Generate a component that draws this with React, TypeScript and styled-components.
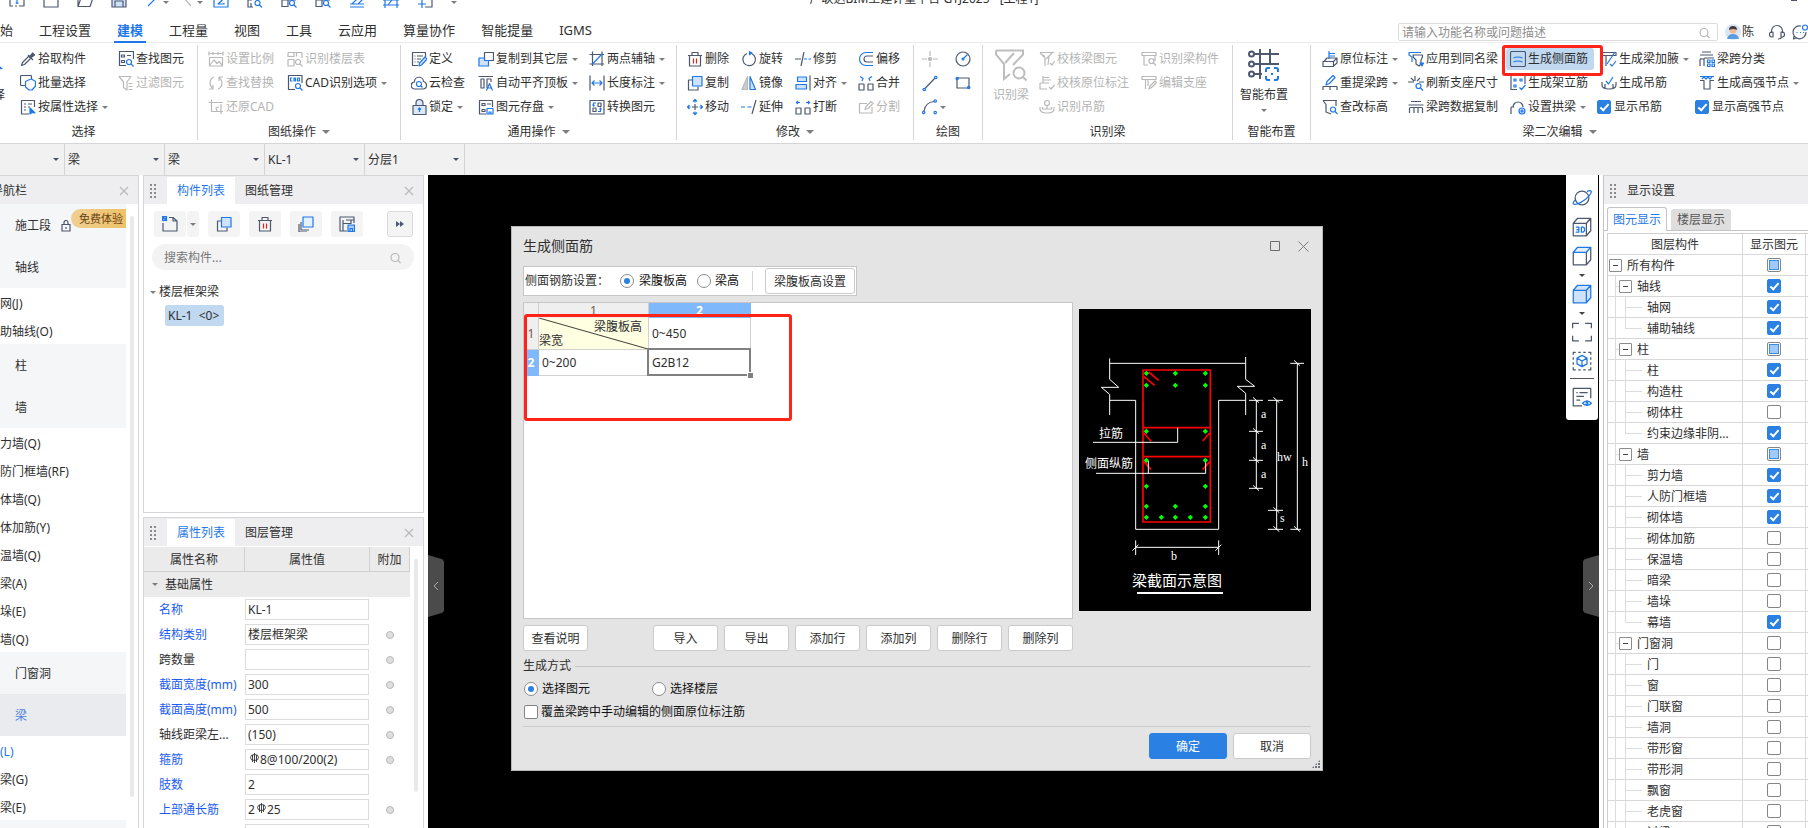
import React from "react";
import styled, { createGlobalStyle, css } from "styled-components";

const C = {
  text: "#2f2f2f",
  blue: "#1f78e8",
  slate: "#4d586f",
  line: "#d6d6d8",
  head: "#eeeef0",
  muted: "#b4b4b4",
  accent: "#2b80e4",
  alert: "#ff2318",
};

const GlobalStyle = createGlobalStyle`
  *, *::before, *::after { box-sizing: border-box; }
  body {
    margin: 0;
    background: #fff;
    color: ${C.text};
    font: 12px/16px "Noto Sans", "Noto Sans CJK SC", sans-serif;
  }
  button, input, select {
    font: inherit;
    color: inherit;
    margin: 0;
    padding: 0;
    border: 0;
    background: none;
    border-radius: 0;
    outline: 0;
  }
  table { border-collapse: separate; border-spacing: 0; table-layout: fixed; }
  th { font-weight: 400; }
  td, th { padding: 0; }
`;

/* ---------- icons ---------- */

type Tone = "d" | "b" | "r" | "g" | "w";
type Mark = [path: string, tone: Tone, fill?: string];

const tones: Record<Tone, string> = {
  d: C.slate,
  b: C.blue,
  r: "#e0231c",
  g: "#b9b9b9",
  w: "#ffffff",
};

const marks: Record<string, Mark[]> = {
  picker: [
    ["M1.500 14.500l1-3L9 5l2 2L4.500 13.500z", "d"],
    ["M8 4l5 5M9.500 6l3-4 2 2-4 3z", "d", C.slate],
  ],
  batch: [
    ["M5 10.500H1.500a1 1 0 0 1-1-1v-8a1 1 0 0 1 1-1h9a1 1 0 0 1 1 1V4", "d"],
    ["M5.500 6.500l3-1.500 3-1 4 2.500V11l-3.500 4h-3L5.500 12z", "b", "#fff"],
  ],
  byProp: [
    ["M9 15H1.500V1.500h13V8M4 5h2M8 5h4M4 8h2M8 8h2M4 11h2", "d"],
    ["M10 9v6l2-1.500 3 .5z", "b", C.blue],
  ],
  findEl: [
    ["M8 14.500H1.500v-14h14V8M3.500 4h3v2h-3zM9 4.500h4M3.500 9.500h3v2h-3z", "d"],
    ["M8.500 11a2.500 2.500 0 1 0 5 0a2.500 2.500 0 1 0-5 0M13 13l2.500 2.500", "b"],
  ],
  filter: [["M1 1.500h12L9 7v8l-3.500-2.500V7zM10.500 8.500h4M10.500 11.500h4M10.500 14.500h4", "g"]],
  scale: [["M1 2.500h14M1 .500v4M15 .500v4M5 1v3M10 1v3M1.500 6.500h13V15h-13zM2 14l4-5 3 3.500 2-2 3 3.500", "g"]],
  replace: [["M6 2C1 4 1 11 5 13.500M5 10v4H1M10 14c5-2 5-9 1-11.500M11 6V2h4", "g"]],
  restore: [["M.500 3.500H15M3.500 .500V12.500H15M13 5v10M11 8l-3 1 1 3", "g"]],
  floorTable: [["M1 1.500h14V7M1 1.500v4h6v-4M1 8.500h6V15M1 8.500V15h6M9.500 5.500v-4M8.500 11a2.500 2.500 0 1 0 5 0a2.500 2.500 0 1 0-5 0M13 13l2.500 2.500", "g"]],
  cad: [
    ["M8 14.500H1.500v-14h13.500V8", "d"],
    ["M5.500 3h-2v3h2M7 6.500V3h1.500v3.500M7 5h1.500M10.500 3h2v3h-2zM8.500 11a2.500 2.500 0 1 0 5 0a2.500 2.500 0 1 0-5 0M13 13l2.500 2.500", "b"],
  ],
  define: [
    ["M7 14.500H1.500v-13h13V6M3.500 5h1M6 5h6M3.500 8h1M6 8h4M3.500 11h1M6 11h2", "d"],
    ["M8 15l.500-3 5.500-6 2 2-5.500 6z", "b", "#d6e6fb"],
  ],
  cloud: [
    ["M4 14a3.500 3.500 0 0 1-.500-7A4.500 4.500 0 0 1 12.500 6.500 3.800 3.800 0 0 1 12 14z", "d"],
    ["M5.500 9a2.500 2.500 0 1 0 5 0a2.500 2.500 0 1 0-5 0M10 11l1.500 1.500", "b"],
  ],
  lock: [
    ["M2 6.500h13v9H2zM5 6V4a3.500 3.500 0 0 1 7 0v2", "d", "#dce8f8"],
    ["M8.500 13V9M7 10.500L8.500 9l1.500 1.500", "b"],
  ],
  copyFloor: [
    ["M6.500 1.500h9v8h-9z", "d"],
    ["M1 7h5.500v2.500h4V15H1z", "b", "#cfe2fb"],
  ],
  alignTop: [
    ["M.500 1.500H15M3 4h3v9H3zM9 13V4h4v3", "d"],
    ["M8.500 15.500l3-7 3 7M9.500 13h4", "b"],
  ],
  store: [
    ["M8 15H1.500V1.500h13V8M4 4.500h3v2H4zM9 5h4M4 10.500h3v2H4z", "d"],
    ["M9 9.500h6V15H9zM11 15v-2h2v2", "b"],
  ],
  twoPoint: [
    ["M.500 3.500H15M.500 13H15M3.500 .500v14.500M13 .500v14.500", "d"],
    ["M3.500 13L13 3", "b"],
  ],
  length: [
    ["M1 .500v15M15 .500v15", "d"],
    ["M3 8h10M5.500 5.500L3 8l2.500 2.500M10.500 5.500L13 8l-2.500 2.500", "b"],
  ],
  convert: [
    ["M1 1.500h14v13.500H1zM9 4h3v3.500H9zM4 9h3v3.500H4z", "d"],
    ["M7 4H4.500v3M9 12.500h2.500V9.500M3.500 5.500l1 1.500 1-1M10.500 10.500l1-1.500 1 1.500", "b"],
  ],
  trash: [
    ["M1 4.500h14M5 4V1.500h6V4M2.500 4.500V15h11V4.500", "d"],
    ["M6.500 7.500v5M9.500 7.500v5", "r"],
  ],
  copy: [
    ["M5 5H1.500v10H11v-3.500", "d"],
    ["M5.500 1.500h9.500v9.500H5.500z", "b", "#cfe2fb"],
  ],
  move: [
    ["M8 5v6M5 8h6", "d"],
    ["M8 3.500V1M6 2.500L8 .500l2 2M8 12.500V15M6 13.500l2 2 2-2M3.500 8H1M2.500 6L.500 8l2 2M12.500 8H15M13.500 6l2 2-2 2", "b"],
  ],
  rotate: [
    ["M6 2.500a6.300 6.300 0 1 0 5 .3", "d"],
    ["M8 .500l3 1.500-3 2", "b", C.blue],
  ],
  mirror: [
    ["M6.500 1.500V14.500H1z", "g", "#c9ccd2"],
    ["M9 1.500V14.500h5.500z", "b", "#cfe2fb"],
  ],
  extend: [
    ["M15 1l-4 14", "d"],
    ["M0 8h4M6.500 8h4", "b"],
  ],
  trim: [
    ["M0 8h6M9 1L6 15", "d"],
    ["M9 8h3M13.500 8H16", "b"],
  ],
  alignRight: [
    ["M15 .500v15", "d"],
    ["M2.500 2h9v4.500h-9zM1 9.500h10.500V14H1z", "b", "#cfe2fb"],
  ],
  breakIt: [
    ["M1 9h5v6H1zM10 9h5v6h-5z", "d"],
    ["M5 3.500H1.500M3 2L1.500 3.500 3 5M11 3.500h3.500M13 2l1.500 1.500L13 5", "b"],
  ],
  offset: [
    ["M15 5H9a3 3 0 0 0 0 6h6", "d"],
    ["M15 1.500H8a6.500 6.500 0 0 0 0 13h7", "b"],
  ],
  merge: [
    ["M1 9h5v6H1zM10 9h5v6h-5z", "d"],
    ["M2 1.500l3 2-1 2.500M14 1.500l-3 2 1 2.500", "b"],
  ],
  split: [["M9 4.500H1.500V14h12.500V8M7 10.500l1-3 5-5 2 2-5 5z", "g"]],
  point: [["M8 0v5M8 11v5M0 8h5M11 8h5", "g"], ["M6.500 8a1.500 1.500 0 1 0 3 0a1.500 1.500 0 1 0-3 0", "g", "#b9b9b9"]],
  circle: [["M1 8a7 7 0 1 0 14 0a7 7 0 1 0-14 0", "d"], ["M8 8l4.500-4.500M7 8a1 1 0 1 0 2 0a1 1 0 1 0-2 0", "b"]],
  lineTool: [["M3 13.500L13 3", "d"], ["M1 14.500a1.200 1.200 0 1 0 2.400 0a1.200 1.200 0 1 0-2.400 0M12.500 2.500a1.200 1.200 0 1 0 2.400 0a1.200 1.200 0 1 0-2.400 0", "b"]],
  rectTool: [["M2 3h12v10H2z", "d"], ["M1 3.500a1.200 1.200 0 1 0 2.400 0a1.200 1.200 0 1 0-2.400 0M12.500 12.500a1.200 1.200 0 1 0 2.400 0a1.200 1.200 0 1 0-2.400 0", "b"]],
  arcTool: [["M2 12C3 6 6 3 12 2.500", "d"], ["M.500 13.500a1.200 1.200 0 1 0 2.400 0a1.200 1.200 0 1 0-2.400 0M12 2a1.200 1.200 0 1 0 2.400 0a1.200 1.200 0 1 0-2.400 0M12 13.500a1.200 1.200 0 1 0 2.400 0a1.200 1.200 0 1 0-2.400 0", "b"]],
  checkBeam: [["M1 1.500h14M1 1.500l5 5.500v8M13 2L7 8M4 4l2 2M10 5l-1 9M11 12l2 2 2.500-4", "g"]],
  checkLabel: [["M4 1v7M4 2.500h6M4 5h8M1 8h9M1 8v6h7M10 12l2 2 3.500-4", "g"]],
  hookG: [["M5.500 4a2.500 2.500 0 1 0 5 0a2.500 2.500 0 1 0-5 0M8 7v3M1 8v2c0 2 1.500 4 7 4s7-2 7-4V8M3.500 8v2h9V8", "g"]],
  beamPart: [["M1 1.500h14v3H1zM3 5v9h4M14 5v5M8 10a2.500 2.500 0 1 0 5 0a2.500 2.500 0 1 0-5 0M12.500 12l2.500 2.500", "g"]],
  editSeat: [["M1 1.500h14v3H1zM4.500 5v9M8 14l1-3 5-5 1.500 1.500-5 5zM7 5v6", "g"]],
  origin: [["M1 10.500h10.500v5H1zM2 10.500L5 7h10l-3.500 3.500M15 7v5l-3.500 3", "d"], ["M7 8V0M7 2.500h6M7 5h6", "b"]],
  respan: [["M1 15v-3.500h14V15M8 11.500V15", "d"], ["M4 10l1-3.500L11 .500l2 2L7.500 8.500z", "b"]],
  height: [["M1 1.500h14M1 1.500l3 4V13l5 2M14 2v5", "d"], ["M8.500 10.500a2.500 2.500 0 1 0 5 0a2.500 2.500 0 1 0-5 0M13 12.500l2.500 2.500", "b"]],
  applySame: [["M5 4h9.500v2L13 9v4l-2 2-3-2V9L5.500 6.500z", "d"], ["M4 11V6L1 4V1.500h12", "b"], ["M12 12h3.500L14 15z", "b", C.blue]],
  refresh: [["M7 1v5M0 7h6M3 3l3 3M12 3l-3 3M16 7h-5", "d"], ["M8 11a2.500 2.500 0 1 0 5 0a2.500 2.500 0 1 0-5 0M12.500 13l2.500 2.500", "b"]],
  spanCopy: [["M3 2.500h10M0.500 6h15M1.500 14V9.500q0-1 1-1h11q1 0 1 1V14M6 8.500V14M10 8.500V14", "d"]],
  sideBar: [["M2 .500h12q1.500 0 1.500 1.500v12q0 1.500-1.500 1.500H2q-1.500 0-1.500-1.500V2q0-1.500 1.500-1.500z", "d"], ["M3.500 7q4-2 9 0M3.500 11q4-2 9 0", "b"]],
  frameBar: [["M1 .500h4M1 .500v14h6M15 .500V9M11 .500h4", "d"], ["M4 4h2v2H4zM10 4h2v2h-2zM4 10h2v2H4zM9.500 12.500l2 2 4-4.500", "b"]],
  arch: [["M1 8h3M1 8v7M3 8a5 5 0 0 1 10 0", "d"], ["M9 12a3 3 0 1 0 6 0a3 3 0 1 0-6 0M11 12a1 1 0 1 0 2 0a1 1 0 1 0-2 0", "b", "#cfe2fb"]],
  haunch: [["M0 1.500h15v3H0M5 5v10", "d"], ["M14 1l-8 12M9 13l2 2 4-5", "b"]],
  hanging: [["M1 7v3c0 3 2 4 7 4s7-1 7-4V7M4 9v5M12 9v5", "d"], ["M5 6l2.500 3L12 2", "b"]],
  classify: [["M3 1h9M1 4h13M1 8h4M1 15V9q0-1.500 1.500-1.500M5 15V8q0-1 1-1h9", "d"], ["M8.500 9h2.500v2.500H8.500zM13 9h2.500v2.500H13zM8.500 13h2.500v2.500H8.500zM13 13h2.500v2.500H13z", "b"]],
  strong: [["M1 5.500h4V14h6V5.500h4", "d"], ["M1 1.500h14M3 4l2-2 2 2 2-2 2 2 2-2", "b"]],
  newDoc: [["M7 1.500h4L15 5v10H1V7M11 1.500V5h4", "d"], ["M.500 .500h4v4h-4zM1 1l4 4M5 1L1 5", "b", "#8fbcf6"]],
  layersCopy: [["M3 6v8h8M1 8v8h8", "d"], ["M5 1h10v10H5z", "b", "#e6f1fe"]],
  saveTpl: [["M8 15H1V1h14v6M4 15V4M4 7.500h8V4M7 4h8", "d"], ["M9 9h6.500v6.500H9zM11 15v-2.500h2.500V15", "b", "#a9cdfa"]],
  search: [["M3 7.500a4 4 0 1 0 8 0a4 4 0 1 0-8 0M10 10.500L12.500 13", "g"]],
  close: [["M4 4l8 8M12 4l-8 8", "g"]],
  headset: [["M2.500 9V7a5.500 5.500 0 0 1 11 0v2M2 8h2v5H2.500Q.500 12.500 .500 10.500T2 8zM14 8h-2v5h1.500q2-.5 2-2.500T14 8zM13 13q-1 2-4 2", "d"]],
  chat: [["M9 2a6.500 6.500 0 1 0 5 6M2 12l-.500 3 3-1", "d"], ["M4.500 8.500h1M8 8.500h1M11 8.500h1M10.500 3.500a2.500 2.500 0 1 0 5 0a2.500 2.500 0 1 0-5 0", "b"]],
  qSelect: [["M1 1v13h3M6 14h2M10 14h5V1", "d"], ["M8 6v6M6.500 11h3", "b", C.blue]],
  qNew: [["M1 1h14v14H1z", "d"]],
  qOpen: [["M1 14.500L4 6h12l-3 8.500zM1 14V1", "d"]],
  qSave: [["M1 1h14v14H1zM4 15V9h8v6", "d", "#cfe2fb"]],
  qUndo: [["M12 5L3 14M12 5q2-2 1-4", "b"]],
  qRedo: [["M4 5l8 9", "g"]],
  qSum: [["M1 1h14v14H1zM11 6v-1H5l4 3.500L5 12h6v-1", "b"]],
  qFind: [["M1 1v14h5M1 8h4M4 11v4", "d"], ["M8 11a2.500 2.500 0 1 0 5 0a2.500 2.500 0 1 0-5 0M12.500 13l2.500 2.500", "b"]],
  qGrid: [["M1 1v13.500h6M1 8h14M7 1v14", "d"], ["M8.500 11a2.500 2.500 0 1 0 5 0a2.500 2.500 0 1 0-5 0M13 13l2.500 2.500", "b"]],
  qDraw: [["M1 15h14M3 12l9-9 3 3-6 6zM1 12h14", "b"]],
  qSection: [["M2 1v15M14 1v15M0 8h16M0 13h16M5 13l4-5", "b"]],
  qFit: [["M8 15h7V1", "d"], ["M1 12h8M5 8v8", "b"]],
  winMin: [["M5 8h6", "d"]],
  orbit: [["M2.500 8a5.500 5.500 0 1 0 11 0a5.500 5.500 0 1 0-11 0", "d"], ["M2.500 9.500C-1 13.500 2 14 7 11.500S17 3 15 2.300c-.8-.4-2 0-3 .6", "b"]],
  cube3d: [["M1 5h10.500v10H1zM1 5l3.500-4H15v10l-3.500 4M11.500 5L15 1", "d"], ["M3 8h2.500v4H3M3.500 10h2M7.500 8h1.500l1 1v2l-1 1H7.500z", "b"]],
  cubeTop: [["M1 5v10h10.500V5M11.500 15L15 11V1", "d"], ["M1 5l3.500-4H15l-3.500 4z", "b", "#e3effd"]],
  cubeBlue: [["M1 5h10.500v10H1zM1 5l3.500-4H15v10l-3.500 4M11.500 5L15 1", "b", "#cfe2fb"]],
  brackets: [["M5.500 1H.500v4M10.500 1h5v4M.500 11v4h5M15.500 11v4h-5", "d"]],
  cubeDash: [["M1 3V1h2M5 1h2M9 1h2M13 1h2v2M15 5v2M15 9v2M15 13v2h-2M11 15H9M7 15H5M3 15H1v-2M1 11V9M1 7V5", "d"], ["M8 3.500l4 2.200v4.600L8 12.500l-4-2.200V5.700zM4 5.700L8 8l4-2.300M8 8v4.500", "b"]],
  listEye: [["M8 15H1V1h14v8M3.500 4.500h1M6 4.500h6.500M3.500 7.500h6M3.500 10.500h3", "d"], ["M8.500 13q3.500-4 7 0-3.500 3.500-7 0zM11.500 13a.6.6 0 1 0 1 0a.6.6 0 1 0-1 0", "b"]],
};

const Svg = styled.svg`
  display: block;
  flex: none;
`;

function Icon({ name, size = 16, weight = 1.2 }: { name: string; size?: number; weight?: number }) {
  return (
    <Svg width={size} height={size} viewBox="0 0 16 16" strokeWidth={weight} strokeLinejoin="round" aria-hidden="true">
      {marks[name].map(([d, tone, fill], i) => (
        <path key={i} d={d} stroke={tones[tone]} fill={fill ?? "none"} />
      ))}
    </Svg>
  );
}

const Caret = styled.span<{ $big?: boolean; $tone?: string }>`
  flex: none;
  width: 0;
  height: 0;
  border: solid transparent;
  border-width: ${(p) => (p.$big ? "4px 4px 0" : "3px 3px 0")};
  border-top-color: ${(p) => p.$tone ?? "#7d7d7d"};
`;

/* ---------- form parts ---------- */

const CheckBox = styled.input.attrs({ type: "checkbox" })<{ $mixed?: boolean }>`
  appearance: none;
  display: grid;
  place-content: center;
  flex: none;
  width: 14px;
  height: 14px;
  border: 1px solid #858585;
  border-radius: 2px;
  background: #fff;

  &:checked {
    background: ${C.accent};
    border-color: ${C.accent};
  }
  &:checked::after {
    content: "";
    width: 5px;
    height: 9px;
    margin-bottom: 2px;
    border: solid #fff;
    border-width: 0 2px 2px 0;
    transform: rotate(42deg);
  }
  ${(p) =>
    p.$mixed &&
    css`
      &::after {
        content: "";
        width: 10px;
        height: 10px;
        background: #9fcafb;
        border: 1px solid #3a8eea;
      }
    `}
`;

const Radio = styled.input.attrs({ type: "radio" })`
  appearance: none;
  display: grid;
  place-content: center;
  flex: none;
  width: 14px;
  height: 14px;
  border: 1px solid #8c8c8c;
  border-radius: 50%;
  background: #fff;

  &:checked::after {
    content: "";
    width: 6px;
    height: 6px;
    border-radius: 50%;
    background: ${C.accent};
  }
`;

const Choice = styled.label<{ $gap?: number }>`
  display: inline-flex;
  align-items: center;
  gap: ${(p) => p.$gap ?? 4}px;
  color: #111;
  white-space: nowrap;
`;

/* ---------- shell ---------- */

const Shell = styled.div`
  display: flex;
  flex-direction: column;
  height: 100vh;
  overflow: hidden;
  white-space: nowrap;
`;

const TitleBar = styled.header`
  display: grid;
  grid-template-columns: 1fr auto 1fr;
  grid-template-rows: 8px;
  align-items: end;
  flex: none;
`;

const QuickBar = styled.div`
  display: flex;
  padding-left: 9px;
`;

const QuickButton = styled.button`
  display: flex;
  align-items: center;
  gap: 2px;
  width: 34px;
  height: 16px;

  span {
    margin-top: 4px;
  }
`;

const AppTitle = styled.div`
  padding: 0 0 1px 40px;
`;

const WindowButtons = styled.div`
  display: flex;
  align-items: center;
  justify-content: flex-end;
  padding: 0 6px 0 0;
`;

const MenuBar = styled.nav`
  display: flex;
  align-items: flex-end;
  height: 35px;
  flex: none;
  margin-left: -26px;
  border-bottom: 1px solid #ececec;
`;

const MenuTab = styled.button<{ $active?: boolean }>`
  position: relative;
  height: 24px;
  padding: 0 13px 1px;
  font-size: 13px;
  color: ${(p) => (p.$active ? C.blue : C.text)};
  font-weight: ${(p) => (p.$active ? 700 : 400)};

  ${(p) =>
    p.$active &&
    css`
      &::after {
        content: "";
        position: absolute;
        left: 10px;
        right: 10px;
        bottom: -1px;
        height: 2px;
        background: ${C.blue};
      }
    `}
`;

const MenuRight = styled.div`
  display: flex;
  align-items: center;
  gap: 7px;
  margin-left: auto;
  height: 20px;
`;

const HelpSearch = styled.label`
  display: flex;
  align-items: center;
  width: 320px;
  height: 18px;
  padding: 1px 4px 0 3px;
  border: 1px solid #dcdcdc;
  border-radius: 2px;

  input {
    flex: 1;
    min-width: 0;
  }
  input::placeholder {
    color: #8e8e8e;
    opacity: 1;
  }
`;

const User = styled.button`
  display: flex;
  align-items: center;
  gap: 1px;
  margin-right: 8px;
`;

const Ribbon = styled.div`
  display: flex;
  height: 101px;
  flex: none;
  margin-left: -30px;
  border-bottom: 1px solid ${C.line};
`;

const Group = styled.section<{ $w?: number }>`
  display: flex;
  flex-direction: column;
  flex: ${(p) => (p.$w ? "none" : "1")};
  width: ${(p) => (p.$w ? `${p.$w}px` : "auto")};
  margin: 2px 0 3px;
  padding-top: 2px;
  border-right: ${(p) => (p.$w ? `1px solid ${C.line}` : "0")};
`;

const GroupBody = styled.div<{ $pad?: number }>`
  display: flex;
  flex: none;
  height: 72px;
  padding-left: ${(p) => p.$pad ?? 6}px;
`;

const GroupName = styled.div`
  display: flex;
  align-items: center;
  justify-content: center;
  gap: 6px;
  flex: none;
  height: 25px;
`;

const Stack = styled.div<{ $w?: number }>`
  display: flex;
  flex-direction: column;
  flex: none;
  width: ${(p) => (p.$w ? `${p.$w}px` : "auto")};
`;

const Tool = styled.button<{ $off?: boolean; $on?: boolean }>`
  position: relative;
  display: flex;
  align-items: center;
  gap: 2px;
  width: max-content;
  height: 22px;
  margin: 1px 0;
  padding: 0 4px;
  border-radius: 3px;
  color: ${(p) => (p.$off ? C.muted : C.text)};
  background: ${(p) => (p.$on ? "#c1d8f1" : "transparent")};
  z-index: ${(p) => (p.$on ? 1 : "auto")};
`;

const ToolText = styled.span`
  margin-right: 2px;
`;

const Highlight = styled.span`
  position: absolute;
  inset: -3px -9px -6px -4px;
  border: 3px solid ${C.alert};
  border-radius: 3px;
  pointer-events: none;
`;

const ToolCheck = styled.label`
  display: flex;
  align-items: center;
  gap: 3px;
  height: 24px;
`;

const BigTool = styled.button<{ $w: number; $off?: boolean }>`
  display: flex;
  flex-direction: column;
  align-items: center;
  gap: 6px;
  width: ${(p) => p.$w}px;
  height: 72px;
  padding-top: 2px;
  color: ${(p) => (p.$off ? C.muted : C.text)};
`;

type ToolSpec = { icon: string; text?: string; more?: boolean; off?: boolean; on?: boolean };

function Tools({ w, items, children }: { w?: number; items: ToolSpec[]; children?: React.ReactNode }) {
  return (
    <Stack $w={w}>
      {items.map((t) => (
        <Tool key={t.icon} type="button" $off={t.off} $on={t.on} aria-label={t.text ?? t.icon}>
          <Icon name={t.icon} />
          {t.text && <ToolText>{t.text}</ToolText>}
          {t.more && <Caret />}
          {t.on && <Highlight />}
        </Tool>
      ))}
      {children}
    </Stack>
  );
}

/* ---------- selector strip ---------- */

const Strip = styled.div`
  display: flex;
  height: 31px;
  flex: none;
  margin-left: -35px;
  background: #f1f1f1;
`;

const Combo = styled.label`
  position: relative;
  display: flex;
  align-items: center;
  width: 100px;
  padding: 0 5px 0 3px;
  border-right: 1px solid #d3d3d3;

  select {
    appearance: none;
    flex: 1;
    min-width: 0;
  }
`;

/* ---------- work area ---------- */

const Work = styled.main`
  display: flex;
  flex: 1;
  min-height: 0;
  gap: 4px;
`;

const PanelHead = styled.div`
  display: flex;
  align-items: center;
  flex: none;
  height: 28px;
  padding-top: 1px;
  background: ${C.head};
`;

const CloseButton = styled.button`
  margin-left: auto;
  margin-right: 6px;
`;

const NavPanel = styled.aside`
  width: 139px;
  flex: none;
  border-top: 1px solid ${C.line};
  border-right: 1px solid ${C.line};
  overflow: hidden;
`;

const NavShift = styled.div`
  margin-left: -24px;
`;

const NavHead = styled(PanelHead)`
  padding-left: 15px;
`;

const NavBody = styled.div`
  display: flex;
  align-items: flex-start;
`;

const NavList = styled.div`
  flex: 1;
`;

const Scrollbar = styled.div<{ $h: number }>`
  flex: none;
  width: 4px;
  height: ${(p) => p.$h}px;
  margin: 12px 4px 0;
  border-radius: 2px;
  background: #e9e9e9;
`;

const NavGroup = styled.button<{ $active?: boolean }>`
  position: relative;
  display: flex;
  align-items: center;
  width: 100%;
  height: 42px;
  padding: 2px 0 0 39px;
  background: ${(p) => (p.$active ? "#eaebef" : "#f5f6f8")};
  color: ${(p) => (p.$active ? "#4a82d9" : C.text)};
`;

const NavItem = styled.button<{ $active?: boolean }>`
  display: block;
  width: 100%;
  height: 28px;
  padding: 3px 0 0 12px;
  text-align: left;
  color: ${(p) => (p.$active ? C.blue : C.text)};
`;

const Trial = styled.span`
  position: absolute;
  right: 0;
  top: 5px;
  width: 55px;
  height: 19px;
  padding-left: 8px;
  border-radius: 10px 0 0 10px;
  background: linear-gradient(90deg, #f0cf93, #eec168);
  color: #6a4312;
  font-size: 11px;
  line-height: 20px;
  text-align: left;
`;

const LockIcon = styled.span`
  margin-left: 10px;
`;

const Column = styled.div`
  display: flex;
  flex-direction: column;
  flex: none;
  gap: 4px;
  width: 281px;
`;

const Panel = styled.section<{ $h?: number }>`
  display: flex;
  flex-direction: column;
  flex: ${(p) => (p.$h ? "none" : "1 1 0")};
  height: ${(p) => (p.$h ? `${p.$h}px` : "auto")};
  min-height: 0;
  overflow: hidden;
  border: 1px solid ${C.line};
  border-bottom-width: ${(p) => (p.$h ? 1 : 0)}px;
`;

const GripDots = styled.span`
  width: 6px;
  height: 14px;
  margin: 0 11px 0 6px;
  background: radial-gradient(circle at 1px 1px, #8a8a8a 1px, transparent 1px) 0 0 / 4px 4px;
`;

const PanelTab = styled.button<{ $active?: boolean }>`
  width: 68px;
  height: 27px;
  background: ${(p) => (p.$active ? "#fff" : "transparent")};
  color: ${(p) => (p.$active ? C.blue : C.text)};
`;

const PartBar = styled.div`
  display: flex;
  gap: 9px;
  padding: 7px 10px 0;
`;

const PartButton = styled.button<{ $framed?: boolean }>`
  display: flex;
  align-items: center;
  justify-content: center;
  width: ${(p) => (p.$framed ? 26 : 32)}px;
  height: 26px;
  margin-left: ${(p) => (p.$framed ? "auto" : 0)};
  border: ${(p) => (p.$framed ? "1px solid #dadada" : 0)};
  border-radius: 3px;
  background: #f4f4f5;
`;

const SplitButton = styled.span`
  display: flex;
  gap: 1px;

  button + button {
    width: 12px;
  }
`;

const PartSearch = styled.label`
  display: flex;
  align-items: center;
  height: 26px;
  margin: 7px 9px 0 8px;
  padding: 1px 10px 0 12px;
  border-radius: 13px;
  background: #f3f3f3;

  input {
    flex: 1;
    min-width: 0;
  }
  input::placeholder {
    color: #777;
    opacity: 1;
  }
`;

const PartTree = styled.div`
  display: flex;
  flex-direction: column;
  align-items: flex-start;
  gap: 5px;
  padding: 14px 0 0 6px;
`;

const TreeParent = styled.div`
  display: flex;
  align-items: center;
  gap: 3px;
`;

const TreeLeaf = styled.button`
  height: 21px;
  margin-left: 15px;
  padding: 0 5px 0 3px;
  border-radius: 3px;
  background: #c1d8f1;
  white-space: pre;
`;

const PropArea = styled.div`
  display: flex;
  align-items: flex-start;
  padding-top: 1px;
`;

const PropTable = styled.table`
  width: 266px;
  flex: none;

  thead th {
    height: 25px;
    padding-top: 1px;
    background: #ebebeb;
    border-right: 1px solid #d0d0d0;
    border-bottom: 1px solid #d0d0d0;
  }
  tbody th {
    padding: 1px 0 0 15px;
    text-align: left;
  }
  tbody tr {
    height: 25px;
  }
`;

const PropGroup = styled.td`
  background: #ebebeb;

  button {
    display: flex;
    align-items: center;
    gap: 7px;
    padding-left: 8px;
  }
`;

const PropLabel = styled.label<{ $key?: boolean }>`
  color: ${(p) => (p.$key ? "#1b5cf0" : C.text)};
`;

const ValueBox = styled.div`
  display: flex;
  align-items: center;
  width: 124px;
  height: 21px;
  padding: 0 2px;
  border: 1px solid #dcdcdc;

  input {
    flex: 1;
    min-width: 0;
  }
  svg {
    margin: 0 1px 4px 2px;
  }
`;

const Dot = styled.input.attrs({ type: "radio" })`
  appearance: none;
  display: block;
  width: 8px;
  height: 8px;
  margin: 0 auto;
  border: 1px solid #b9b9b9;
  border-radius: 50%;
  background: #dedede;
`;

/* ---------- canvas ---------- */

const Canvas = styled.section`
  position: relative;
  flex: 1;
  min-width: 0;
  background: #000;
`;

const Handle = styled.button<{ $side: "left" | "right" }>`
  position: absolute;
  top: 380px;
  ${(p) => p.$side}: 0;
  width: 16px;
  height: 62px;
  background: #4b4b4b;
  clip-path: ${(p) =>
    p.$side === "left"
      ? "polygon(0 0, 90% 7%, 100% 10%, 100% 90%, 90% 93%, 0 100%)"
      : "polygon(100% 0, 10% 7%, 0 10%, 0 90%, 10% 93%, 100% 100%)"};

  svg {
    margin: 0 auto;
  }
`;

const ViewBar = styled.div`
  position: absolute;
  top: 0;
  right: 1px;
  display: flex;
  flex-direction: column;
  align-items: center;
  gap: 9px;
  width: 32px;
  padding: 13px 0;
  border-radius: 0 0 3px 3px;
  background: #fff;
`;

const ViewMenu = styled.button`
  display: flex;
  flex-direction: column;
  align-items: center;
  gap: 8px;
  margin-bottom: -2px;
`;

const ViewRule = styled.span`
  width: 24px;
  height: 1px;
  margin: -2px 0 -1px;
  background: #555;
`;

/* ---------- dialog ---------- */

const Dialog = styled.form`
  position: absolute;
  left: 83px;
  top: 51px;
  width: 812px;
  height: 545px;
  padding: 0 11px;
  border: 1px solid #b9b9b9;
  background: #e4e4e4;
`;

const DialogHead = styled.div`
  display: flex;
  align-items: center;
  gap: 12px;
  height: 39px;
  padding-bottom: 2px;

  h2 {
    margin: 0 auto 0 0;
    font-size: 14px;
    font-weight: 400;
  }
`;

const OptionBar = styled.div`
  display: flex;
  align-items: center;
  width: 334px;
  height: 30px;
  padding: 0 1px;
  border: 1px solid #c6c6ca;
  background: #fff;
`;

const OptionRule = styled.span`
  width: 1px;
  height: 20px;
  margin: 0 12px 0 auto;
  background: #d4d4d4;
`;

const RadioPair = styled.div<{ $gap: number }>`
  display: flex;
  gap: ${(p) => p.$gap}px;
`;

const OptionRadios = styled(RadioPair)`
  margin-left: 11px;
`;

const Button = styled.button<{ $w: number; $primary?: boolean }>`
  flex: none;
  width: ${(p) => p.$w}px;
  height: 26px;
  padding-top: 1px;
  border: 1px solid ${(p) => (p.$primary ? C.accent : "#cacaca")};
  border-radius: 3px;
  background: ${(p) => (p.$primary ? C.accent : "#fff")};
  color: ${(p) => (p.$primary ? "#fff" : C.text)};
`;

const DialogBody = styled.div`
  display: flex;
  gap: 6px;
  margin-top: 6px;
`;

const SheetBox = styled.div`
  position: relative;
  flex: 1;
  height: 317px;
  border: 1px solid #c6c6ca;
  background: #fff;
`;

const Sheet = styled.table`
  width: 227px;

  thead th {
    height: 15px;
    background: #efefef;
    border-right: 1px solid #cfcfcf;
    line-height: 14px;
    color: #6b5a50;
  }
  tbody th {
    background: #efefef;
    border-bottom: 1px solid #cfcfcf;
    border-right: 1px solid #cfcfcf;
    color: #6b5a50;
  }
  thead th.on,
  tbody th.on {
    background: #7fb9fb;
    border-color: #7fb9fb;
    color: #fff;
    font-weight: 700;
  }
  td {
    padding-left: 3px;
    border-right: 1px solid #d2d2d2;
    border-bottom: 1px solid #d2d2d2;
  }
`;

const SheetRow = styled.tr<{ $h: number }>`
  height: ${(p) => p.$h}px;
`;

const CornerCell = styled.td`
  && {
    padding: 0;
    line-height: 14px;
    background: linear-gradient(
        to top right,
        transparent calc(50% - 1px),
        #44443c 50%,
        transparent calc(50% + 1px)
      )
      #ffffe1;
  }
  div {
    padding: 1px 6px 0 0;
    text-align: right;
  }
  div + div {
    padding: 0 0 1px;
    text-align: left;
  }
`;

const ActiveCell = styled.td`
  position: relative;

  &::before {
    content: "";
    position: absolute;
    inset: -2px -1px -1px -2px;
    border: 2px solid #808080;
  }
  &::after {
    content: "";
    position: absolute;
    right: -3px;
    bottom: -3px;
    width: 6px;
    height: 6px;
    border: solid #fff;
    border-width: 1px 0 0 1px;
    background: #808080;
  }
`;

const SheetMark = styled.span`
  position: absolute;
  left: 0;
  top: 11px;
  width: 268px;
  height: 107px;
  border: 3px solid ${C.alert};
  border-radius: 3px;
  pointer-events: none;
`;

const Figure = styled.svg`
  display: block;
  flex: none;
  margin-top: 7px;
  background: #000;
`;

const ButtonRow = styled.div`
  display: flex;
  gap: 6px;
  width: 550px;
  margin-top: 6px;

  button:first-child {
    margin-right: auto;
  }
`;

const Fieldset = styled.fieldset`
  margin: 7px 0 0;
  padding: 0;
  border: 0;
  height: 69px;
  border-bottom: 1px solid #cbcbcb;
`;

const Legend = styled.legend`
  display: flex;
  align-items: center;
  gap: 4px;
  width: 100%;
  height: 16px;
  padding: 0;

  &::after {
    content: "";
    flex: 1;
    height: 1px;
    background: #c8c8c8;
  }
`;

const FieldRows = styled.div`
  display: flex;
  flex-direction: column;
  align-items: flex-start;
  gap: 7px;
  padding: 7px 1px 0;
`;

const DialogFoot = styled.div`
  display: flex;
  justify-content: flex-end;
  gap: 6px;
  margin-top: 6px;
`;

const SizeGrip = styled.span`
  position: absolute;
  right: 2px;
  bottom: 2px;
  width: 8px;
  height: 8px;
  background: radial-gradient(circle at 1px 1px, #6c7078 1px, transparent 1px) 0 0 / 3px 3px;
  clip-path: polygon(100% 0, 100% 100%, 0 100%);
`;

/* ---------- display settings ---------- */

const SidePanel = styled.aside`
  width: 205px;
  flex: none;
  overflow: hidden;
  border-top: 1px solid ${C.line};
  border-left: 1px solid #c4c4c8;
`;

const SideTabs = styled.div`
  display: flex;
  align-items: flex-end;
  gap: 4px;
  height: 27px;
  padding-left: 3px;
  border-bottom: 1px solid #c4c4c8;
`;

const SideTab = styled.button<{ $active?: boolean }>`
  width: 60px;
  height: ${(p) => (p.$active ? 24 : 21)}px;
  margin-bottom: ${(p) => (p.$active ? -1 : 0)}px;
  border: ${(p) => (p.$active ? "1px solid #c4c4c8" : 0)};
  border-bottom: 0;
  border-radius: 3px 3px 0 0;
  background: ${(p) => (p.$active ? "#fff" : "#dedede")};
  color: ${(p) => (p.$active ? C.blue : "#555")};
`;

const LayerTable = styled.table`
  width: 202px;
  margin: 2px 0 0 3px;
  border-top: 1px solid #d0d0d0;
  border-left: 1px solid #cfcfcf;

  th,
  td {
    height: 21px;
    border-right: 1px solid #d8d8d8;
    border-bottom: 1px solid #d8d8d8;
  }
  th {
    padding-top: 1px;
  }
  th:last-child,
  td:last-child {
    border-right: 0;
  }
  td input {
    margin: 0 auto;
  }
`;

const TreeCell = styled.div<{ $root?: boolean }>`
  display: flex;
  align-items: center;
  height: 20px;
  padding-left: ${(p) => (p.$root ? 1 : 7)}px;
`;

const Rail = styled.span<{ $w: number; $arm?: boolean; $end?: boolean }>`
  flex: none;
  width: ${(p) => p.$w}px;
  height: 21px;
  background: linear-gradient(#dcdcdc, #dcdcdc) 0 0 / 1px ${(p) => (p.$end ? "10px" : "100%")} no-repeat
    ${(p) => p.$arm && ", linear-gradient(#dcdcdc, #dcdcdc) 0 10px / 100% 1px no-repeat"};
`;

const Expander = styled.button`
  flex: none;
  display: grid;
  place-content: center;
  width: 13px;
  height: 13px;
  border: 1px solid #8c8c8c;
  border-radius: 1px;

  &::after {
    content: "";
    width: 5px;
    height: 1px;
    background: #444;
  }
`;

const LayerName = styled.span`
  margin-left: 5px;
  padding-top: 1px;
`;

/* ---------- data ---------- */

const quick: [string, boolean?][] = [
  ["qSelect"], ["qNew"], ["qOpen"], ["qSave"], ["qUndo", true], ["qRedo", true],
  ["qSum"], ["qFind"], ["qGrid"], ["qGrid"], ["qDraw"], ["qSection"], ["qFit"],
];

const menu = ["开始", "工程设置", "建模", "工程量", "视图", "工具", "云应用", "算量协作", "智能提量", "IGMS"];

type NavEntry = { text: string; group?: boolean; active?: boolean; trial?: boolean };
const nav: NavEntry[] = [
  { text: "施工段", group: true, trial: true },
  { text: "轴线", group: true },
  { text: "轴网(J)" },
  { text: "辅助轴线(O)" },
  { text: "柱", group: true },
  { text: "墙", group: true },
  { text: "剪力墙(Q)" },
  { text: "人防门框墙(RF)" },
  { text: "砌体墙(Q)" },
  { text: "砌体加筋(Y)" },
  { text: "保温墙(Q)" },
  { text: "暗梁(A)" },
  { text: "墙垛(E)" },
  { text: "幕墙(Q)" },
  { text: "门窗洞", group: true },
  { text: "梁", group: true, active: true },
  { text: "梁(L)", active: true },
  { text: "连梁(G)" },
  { text: "圈梁(E)" },
  { text: "板", group: true },
];

type Prop = { name: string; value: string; lead?: string; bar?: boolean; key?: boolean; dot?: boolean };
const props: Prop[] = [
  { name: "名称", value: "KL-1", key: true },
  { name: "结构类别", value: "楼层框架梁", key: true, dot: true },
  { name: "跨数量", value: "", dot: true },
  { name: "截面宽度(mm)", value: "300", key: true, dot: true },
  { name: "截面高度(mm)", value: "500", key: true, dot: true },
  { name: "轴线距梁左...", value: "(150)", dot: true },
  { name: "箍筋", value: "8@100/200(2)", bar: true, key: true, dot: true },
  { name: "肢数", value: "2", key: true },
  { name: "上部通长筋", value: "25", lead: "2", bar: true, key: true, dot: true },
  { name: "下部通长筋", value: "25", lead: "2", bar: true, key: true, dot: true },
];

type Layer = { text: string; level: 0 | 1 | 2; state: 0 | 1 | 2; end?: boolean };
const layers: Layer[] = [
  { text: "所有构件", level: 0, state: 2 },
  { text: "轴线", level: 1, state: 1 },
  { text: "轴网", level: 2, state: 1 },
  { text: "辅助轴线", level: 2, state: 1, end: true },
  { text: "柱", level: 1, state: 2 },
  { text: "柱", level: 2, state: 1 },
  { text: "构造柱", level: 2, state: 1 },
  { text: "砌体柱", level: 2, state: 0 },
  { text: "约束边缘非阴...", level: 2, state: 1, end: true },
  { text: "墙", level: 1, state: 2 },
  { text: "剪力墙", level: 2, state: 1 },
  { text: "人防门框墙", level: 2, state: 1 },
  { text: "砌体墙", level: 2, state: 1 },
  { text: "砌体加筋", level: 2, state: 0 },
  { text: "保温墙", level: 2, state: 0 },
  { text: "暗梁", level: 2, state: 0 },
  { text: "墙垛", level: 2, state: 0 },
  { text: "幕墙", level: 2, state: 1, end: true },
  { text: "门窗洞", level: 1, state: 0 },
  { text: "门", level: 2, state: 0 },
  { text: "窗", level: 2, state: 0 },
  { text: "门联窗", level: 2, state: 0 },
  { text: "墙洞", level: 2, state: 0 },
  { text: "带形窗", level: 2, state: 0 },
  { text: "带形洞", level: 2, state: 0 },
  { text: "飘窗", level: 2, state: 0 },
  { text: "老虎窗", level: 2, state: 0 },
  { text: "过梁", level: 2, state: 0 },
];

/* ---------- sections ---------- */

function RibbonBar() {
  return (
    <Ribbon>
      <Group $w={228}>
        <GroupBody $pad={0}>
          <BigTool type="button" $w={46}>
            <Svg width="32" height="32" viewBox="0 0 32 32" aria-hidden="true">
              <path d="M8 3l18 17-9 1-5 8z" fill={C.blue} />
            </Svg>
            选择
          </BigTool>
          <Tools
            w={98}
            items={[
              { icon: "picker", text: "拾取构件" },
              { icon: "batch", text: "批量选择" },
              { icon: "byProp", text: "按属性选择", more: true },
            ]}
          />
          <Tools items={[{ icon: "findEl", text: "查找图元" }, { icon: "filter", text: "过滤图元", off: true }]} />
        </GroupBody>
        <GroupName>选择</GroupName>
      </Group>
      <Group $w={203}>
        <GroupBody>
          <Tools
            w={79}
            items={[
              { icon: "scale", text: "设置比例", off: true },
              { icon: "replace", text: "查找替换", off: true },
              { icon: "restore", text: "还原CAD", off: true },
            ]}
          />
          <Tools items={[{ icon: "floorTable", text: "识别楼层表", off: true }, { icon: "cad", text: "CAD识别选项", more: true }]} />
        </GroupBody>
        <GroupName>
          图纸操作 <Caret $big />
        </GroupName>
      </Group>
      <Group $w={276}>
        <GroupBody>
          <Tools
            w={67}
            items={[
              { icon: "define", text: "定义" },
              { icon: "cloud", text: "云检查" },
              { icon: "lock", text: "锁定", more: true },
            ]}
          />
          <Tools
            w={111}
            items={[
              { icon: "copyFloor", text: "复制到其它层", more: true },
              { icon: "alignTop", text: "自动平齐顶板", more: true },
              { icon: "store", text: "图元存盘", more: true },
            ]}
          />
          <Tools
            items={[
              { icon: "twoPoint", text: "两点辅轴", more: true },
              { icon: "length", text: "长度标注", more: true },
              { icon: "convert", text: "转换图元" },
            ]}
          />
        </GroupBody>
        <GroupName>
          通用操作 <Caret $big />
        </GroupName>
      </Group>
      <Group $w={237}>
        <GroupBody>
          <Tools w={54} items={[{ icon: "trash", text: "删除" }, { icon: "copy", text: "复制" }, { icon: "move", text: "移动" }]} />
          <Tools w={54} items={[{ icon: "rotate", text: "旋转" }, { icon: "mirror", text: "镜像" }, { icon: "extend", text: "延伸" }]} />
          <Tools w={63} items={[{ icon: "trim", text: "修剪" }, { icon: "alignRight", text: "对齐", more: true }, { icon: "breakIt", text: "打断" }]} />
          <Tools items={[{ icon: "offset", text: "偏移" }, { icon: "merge", text: "合并" }, { icon: "split", text: "分割", off: true }]} />
        </GroupBody>
        <GroupName>
          修改 <Caret $big />
        </GroupName>
      </Group>
      <Group $w={69}>
        <GroupBody $pad={4}>
          <Tools w={33} items={[{ icon: "point" }, { icon: "lineTool" }, { icon: "arcTool", more: true }]} />
          <Tools items={[{ icon: "circle" }, { icon: "rectTool" }]} />
        </GroupBody>
        <GroupName>绘图</GroupName>
      </Group>
      <Group $w={250}>
        <GroupBody $pad={4}>
          <BigTool type="button" $w={48} $off>
            <Svg width="32" height="32" viewBox="0 0 32 32" fill="none" stroke="#bdbdbd" strokeWidth="2" aria-hidden="true">
              <path d="M1 1.500h27v4L18 16M1 1.500v4L9 15v15l6-5M10 14L19 4" />
              <path d="M18.500 24a5.500 5.500 0 1 0 11 0a5.500 5.500 0 1 0-11 0M28 28l3.500 3.500" />
            </Svg>
            识别梁
          </BigTool>
          <Tools
            w={102}
            items={[
              { icon: "checkBeam", text: "校核梁图元", off: true },
              { icon: "checkLabel", text: "校核原位标注", off: true },
              { icon: "hookG", text: "识别吊筋", off: true },
            ]}
          />
          <Tools items={[{ icon: "beamPart", text: "识别梁构件", off: true }, { icon: "editSeat", text: "编辑支座", off: true }]} />
        </GroupBody>
        <GroupName>识别梁</GroupName>
      </Group>
      <Group $w={78}>
        <GroupBody $pad={4}>
          <BigTool type="button" $w={54}>
            <Svg width="32" height="32" viewBox="0 0 32 32" fill="none" strokeWidth="2" aria-hidden="true">
              <path stroke={C.slate} d="M6 5h25M6 15h25M6 25h8M12 0v30M22 0v15M1 5a2.500 2.500 0 1 0 5 0a2.500 2.500 0 1 0-5 0M1 15a2.500 2.500 0 1 0 5 0a2.500 2.500 0 1 0-5 0M1 25a2.500 2.500 0 1 0 5 0a2.500 2.500 0 1 0-5 0" />
              <path stroke={C.blue} d="M22 19h-2q-2 0-2 2v2M26 19h2q2 0 2 2v2M18 27v2q0 2 2 2h2M30 27v2q0 2-2 2h-2M23 25h2" />
            </Svg>
            智能布置
            <Caret />
          </BigTool>
        </GroupBody>
        <GroupName>智能布置</GroupName>
      </Group>
      <Group>
        <GroupBody $pad={7}>
          <Tools
            w={86}
            items={[
              { icon: "origin", text: "原位标注", more: true },
              { icon: "respan", text: "重提梁跨", more: true },
              { icon: "height", text: "查改标高" },
            ]}
          />
          <Tools
            w={102}
            items={[
              { icon: "applySame", text: "应用到同名梁" },
              { icon: "refresh", text: "刷新支座尺寸" },
              { icon: "spanCopy", text: "梁跨数据复制" },
            ]}
          />
          <Tools
            w={91}
            items={[
              { icon: "sideBar", text: "生成侧面筋", on: true },
              { icon: "frameBar", text: "生成架立筋" },
              { icon: "arch", text: "设置拱梁", more: true },
            ]}
          />
          <Tools w={98} items={[{ icon: "haunch", text: "生成梁加腋", more: true }, { icon: "hanging", text: "生成吊筋" }]}>
            <ToolCheck>
              <CheckBox defaultChecked /> 显示吊筋
            </ToolCheck>
          </Tools>
          <Tools items={[{ icon: "classify", text: "梁跨分类" }, { icon: "strong", text: "生成高强节点", more: true }]}>
            <ToolCheck>
              <CheckBox defaultChecked /> 显示高强节点
            </ToolCheck>
          </Tools>
        </GroupBody>
        <GroupName>
          梁二次编辑 <Caret $big />
        </GroupName>
      </Group>
    </Ribbon>
  );
}

function RebarSymbol() {
  return (
    <Svg width="9" height="10" viewBox="0 0 9 10" fill="none" stroke="#333" strokeWidth=".9" aria-hidden="true">
      <path d="M4.500 0v10M.500 4.500a4 3 0 1 0 8 0a4 3 0 1 0-8 0M2.500 2v7M6.500 2v7" />
    </Svg>
  );
}

const bars: [number, number][] = [
  [259, 250], [346, 250], [436, 250], [259, 286], [346, 286], [436, 286], [259, 424], [436, 424],
  [259, 511], [436, 511], [259, 589], [436, 589], [259, 649], [346, 649], [436, 649],
  [259, 682], [304, 682], [346, 682], [391, 682], [436, 682],
];
const ticks: [number, number][] = [
  [589, 331], [589, 424], [589, 511], [589, 595], [650, 331], [650, 661], [650, 718], [712, 220], [712, 718],
];

function BeamSection() {
  return (
    <Figure width="232" height="302" viewBox="0 0 232 302" role="img" aria-label="梁截面示意图">
      <g transform="scale(.33333) translate(-57 -57)" fill="none" strokeWidth="3" stroke="#fff">
        <path d="M149 220H557M149 205V268L176 292H124L149 313V375M557 201V268L584 289H532L557 310V375M149 331H227V718H476V331H557" />
        <path d="M589 331V595M567 331h42M567 424h42M567 511h42M567 595h42M650 331V718M624 331h45M624 661h45M624 718h45M712 220V718M691 220h41M691 718h32" />
        <path d="M227 772H476M227 751V795M476 751V795M217 782l18-18M466 782l18-18" />
        {ticks.map(([x, y]) => (
          <path key={`${x}-${y}`} d={`M${x - 10} ${y - 9}l18 16`} />
        ))}
        <path stroke="#f00" strokeWidth="5" d="M249 240H451V696H249zM249 413H451M249 500H451M266 246L296 271M252 260L284 286M252 429L273 454M449 429L428 453M252 515L273 539M449 515L428 539" />
        <path d="M99 457H353V413M108 550H437V515M265 550V513" />
        {bars.map(([x, y]) => (
          <path key={`${x}-${y}`} d={`M${x} ${y - 8}l8 8-8 8-8-8z`} fill="#0f0" stroke="none" />
        ))}
        <path strokeWidth="6" d="M231 909H489" />
      </g>
      <g fill="#fff" fontFamily='"Noto Sans CJK SC", sans-serif' fontSize="12">
        <text x="20" y="129">拉筋</text>
        <text x="6" y="159">侧面纵筋</text>
        <text x="53" y="277" fontSize="15">梁截面示意图</text>
      </g>
      <g fill="#fff" fontFamily='"Liberation Serif", serif' fontSize="12">
        <text x="182" y="109">a</text>
        <text x="182" y="140">a</text>
        <text x="182" y="169">a</text>
        <text x="198" y="152">hw</text>
        <text x="223" y="157">h</text>
        <text x="201" y="213">s</text>
        <text x="92" y="251">b</text>
      </g>
    </Figure>
  );
}

function SideRebarDialog() {
  return (
    <Dialog onSubmit={(e) => e.preventDefault()}>
      <DialogHead>
        <h2>生成侧面筋</h2>
        <button type="button" aria-label="最大化">
          <Svg width="16" height="16" viewBox="0 0 16 16" fill="none" stroke="#6c6c6c" aria-hidden="true">
            <path d="M3.500 3.500h9v9h-9z" />
          </Svg>
        </button>
        <button type="button" aria-label="关闭">
          <Svg width="16" height="16" viewBox="0 0 16 16" stroke="#7c7c7c" aria-hidden="true">
            <path d="M3.500 3.500l10 10M13.500 3.500l-10 10" />
          </Svg>
        </button>
      </DialogHead>
      <OptionBar>
        侧面钢筋设置：
        <OptionRadios $gap={10}>
          <Choice $gap={5}>
            <Radio name="basis" defaultChecked /> 梁腹板高
          </Choice>
          <Choice $gap={4}>
            <Radio name="basis" /> 梁高
          </Choice>
        </OptionRadios>
        <OptionRule />
        <Button type="button" $w={90}>
          梁腹板高设置
        </Button>
      </OptionBar>
      <DialogBody>
        <SheetBox>
          <Sheet>
            <colgroup>
              <col width="15" />
              <col width="110" />
              <col width="102" />
            </colgroup>
            <thead>
              <tr>
                <th />
                <th>1</th>
                <th className="on">2</th>
              </tr>
            </thead>
            <tbody>
              <SheetRow $h={32}>
                <th>1</th>
                <CornerCell>
                  <div>梁腹板高</div>
                  <div>梁宽</div>
                </CornerCell>
                <td>0~450</td>
              </SheetRow>
              <SheetRow $h={26}>
                <th className="on">2</th>
                <td>0~200</td>
                <ActiveCell>G2B12</ActiveCell>
              </SheetRow>
            </tbody>
          </Sheet>
          <SheetMark />
        </SheetBox>
        <BeamSection />
      </DialogBody>
      <ButtonRow>
        {["查看说明", "导入", "导出", "添加行", "添加列", "删除行", "删除列"].map((t) => (
          <Button key={t} type="button" $w={65}>
            {t}
          </Button>
        ))}
      </ButtonRow>
      <Fieldset>
        <Legend>生成方式</Legend>
        <FieldRows>
          <RadioPair $gap={62}>
            <Choice>
              <Radio name="mode" defaultChecked /> 选择图元
            </Choice>
            <Choice>
              <Radio name="mode" /> 选择楼层
            </Choice>
          </RadioPair>
          <Choice $gap={3}>
            <CheckBox /> 覆盖梁跨中手动编辑的侧面原位标注筋
          </Choice>
        </FieldRows>
      </Fieldset>
      <DialogFoot>
        <Button type="submit" $w={78} $primary>
          确定
        </Button>
        <Button type="button" $w={78}>
          取消
        </Button>
      </DialogFoot>
      <SizeGrip />
    </Dialog>
  );
}

function PanelTabs({ tabs }: { tabs: string[] }) {
  return (
    <PanelHead>
      <GripDots />
      {tabs.map((t, i) => (
        <PanelTab key={t} type="button" $active={i === 0}>
          {t}
        </PanelTab>
      ))}
      <CloseButton type="button" aria-label="关闭">
        <Icon name="close" />
      </CloseButton>
    </PanelHead>
  );
}

export default function App() {
  return (
    <Shell>
      <GlobalStyle />
      <TitleBar>
        <QuickBar>
          {quick.map(([name, more], i) => (
            <QuickButton key={i} type="button" aria-label={name}>
              <Icon name={name} />
              {more && <Caret />}
            </QuickButton>
          ))}
          <QuickButton type="button" aria-label="更多">
            <Caret />
          </QuickButton>
        </QuickBar>
        <AppTitle>广联达BIM土建计量平台 GTJ2025 - [工程1]</AppTitle>
        <WindowButtons>
          <Icon name="winMin" weight={2} />
        </WindowButtons>
      </TitleBar>

      <MenuBar>
        {menu.map((m) => (
          <MenuTab key={m} type="button" $active={m === "建模"}>
            {m}
          </MenuTab>
        ))}
        <MenuRight>
          <HelpSearch>
            <input type="search" placeholder="请输入功能名称或问题描述" aria-label="功能搜索" />
            <Icon name="search" />
          </HelpSearch>
          <User type="button">
            <Svg width="16" height="16" viewBox="0 0 16 16" aria-hidden="true">
              <circle cx="8" cy="8" r="8" fill="#dbe6f5" />
              <path d="M2 15q1-5 6-5t6 5z" fill="#5b9be0" />
              <circle cx="8" cy="6" r="3.500" fill="#f0b892" />
              <path d="M4 6q0-4 4-4t4 4q-4-2-8 0z" fill="#3a3c46" />
            </Svg>
            陈
          </User>
          <button type="button" aria-label="客服">
            <Icon name="headset" />
          </button>
          <button type="button" aria-label="消息">
            <Icon name="chat" />
          </button>
        </MenuRight>
      </MenuBar>

      <RibbonBar />

      <Strip>
        {["", "梁", "梁", "KL-1", "分层1"].map((v, i) => (
          <Combo key={i}>
            <select aria-label={`选择 ${i + 1}`} defaultValue={v}>
              <option value={v}>{v}</option>
            </select>
            <Caret $tone="#4a5263" />
          </Combo>
        ))}
      </Strip>

      <Work>
        <NavPanel>
          <NavShift>
            <NavHead>
              导航栏
              <CloseButton type="button" aria-label="关闭">
                <Icon name="close" />
              </CloseButton>
            </NavHead>
            <NavBody>
              <NavList>
                {nav.map((n) =>
                  n.group ? (
                    <NavGroup key={n.text} type="button" $active={n.active}>
                      {n.text}
                      {n.trial && (
                        <>
                          <LockIcon>
                            <Svg width="10" height="12" viewBox="0 0 10 12" fill="none" stroke={C.slate} strokeWidth="1.200" aria-hidden="true">
                              <path d="M1 4.500h8V11H1zM3 4V2.500a2 2 0 0 1 4 0V4M5 7v2" />
                            </Svg>
                          </LockIcon>
                          <Trial>免费体验</Trial>
                        </>
                      )}
                    </NavGroup>
                  ) : (
                    <NavItem key={n.text} type="button" $active={n.active}>
                      {n.text}
                    </NavItem>
                  )
                )}
              </NavList>
              <Scrollbar $h={581} />
            </NavBody>
          </NavShift>
        </NavPanel>

        <Column>
          <Panel $h={338}>
            <PanelTabs tabs={["构件列表", "图纸管理"]} />
            <PartBar>
              <SplitButton>
                <PartButton type="button" aria-label="新建">
                  <Icon name="newDoc" />
                </PartButton>
                <PartButton type="button" aria-label="新建选项">
                  <Caret />
                </PartButton>
              </SplitButton>
              <PartButton type="button" aria-label="复制">
                <Icon name="copy" />
              </PartButton>
              <PartButton type="button" aria-label="删除">
                <Icon name="trash" />
              </PartButton>
              <PartButton type="button" aria-label="层间复制">
                <Icon name="layersCopy" />
              </PartButton>
              <PartButton type="button" aria-label="存档">
                <Icon name="saveTpl" />
              </PartButton>
              <PartButton type="button" $framed aria-label="更多">
                <Svg width="8" height="6" viewBox="0 0 8 6" fill={C.slate} aria-hidden="true">
                  <path d="M0 0l4 3-4 3zM4 0l4 3-4 3z" />
                </Svg>
              </PartButton>
            </PartBar>
            <PartSearch>
              <input type="search" placeholder="搜索构件..." aria-label="搜索构件" />
              <Icon name="search" />
            </PartSearch>
            <PartTree>
              <TreeParent>
                <Caret />
                楼层框架梁
              </TreeParent>
              <TreeLeaf type="button">{"KL-1  <0>"}</TreeLeaf>
            </PartTree>
          </Panel>

          <Panel>
            <PanelTabs tabs={["属性列表", "图层管理"]} />
            <PropArea>
              <PropTable>
                <colgroup>
                  <col width="101" />
                  <col width="125" />
                  <col width="40" />
                </colgroup>
                <thead>
                  <tr>
                    <th>属性名称</th>
                    <th>属性值</th>
                    <th>附加</th>
                  </tr>
                </thead>
                <tbody>
                  <tr>
                    <PropGroup colSpan={3}>
                      <button type="button">
                        <Caret />
                        基础属性
                      </button>
                    </PropGroup>
                  </tr>
                  {props.map((p, i) => (
                    <tr key={p.name}>
                      <th scope="row">
                        <PropLabel htmlFor={`prop-${i}`} $key={p.key}>
                          {p.name}
                        </PropLabel>
                      </th>
                      <td>
                        <ValueBox>
                          {p.lead}
                          {p.bar && <RebarSymbol />}
                          <input id={`prop-${i}`} type="text" defaultValue={p.value} />
                        </ValueBox>
                      </td>
                      <td>{p.dot && <Dot aria-label={`附加 ${p.name}`} />}</td>
                    </tr>
                  ))}
                </tbody>
              </PropTable>
              <Scrollbar $h={233} />
            </PropArea>
          </Panel>
        </Column>

        <Canvas>
          <Handle type="button" $side="left" aria-label="收起左侧">
            <Svg width="6" height="10" viewBox="0 0 6 10" fill="none" stroke="#aaa" aria-hidden="true">
              <path d="M5 1L1 5l4 4" />
            </Svg>
          </Handle>
          <Handle type="button" $side="right" aria-label="收起右侧">
            <Svg width="6" height="10" viewBox="0 0 6 10" fill="none" stroke="#aaa" aria-hidden="true">
              <path d="M1 1l4 4-4 4" />
            </Svg>
          </Handle>
          <SideRebarDialog />
          <ViewBar>
            <Icon name="orbit" size={20} weight={1} />
            <Icon name="cube3d" size={20} weight={1} />
            <ViewMenu type="button" aria-label="视图方向">
              <Icon name="cubeTop" size={20} weight={1} />
              <Caret $tone="#444" />
            </ViewMenu>
            <ViewMenu type="button" aria-label="显示样式">
              <Icon name="cubeBlue" size={20} weight={1} />
              <Caret $tone="#444" />
            </ViewMenu>
            <Icon name="brackets" size={20} weight={1} />
            <Icon name="cubeDash" size={20} weight={1} />
            <ViewRule />
            <Icon name="listEye" size={20} weight={1} />
          </ViewBar>
        </Canvas>

        <SidePanel>
          <PanelHead>
            <GripDots />
            显示设置
          </PanelHead>
          <SideTabs>
            <SideTab type="button" $active>
              图元显示
            </SideTab>
            <SideTab type="button">楼层显示</SideTab>
          </SideTabs>
          <LayerTable>
            <colgroup>
              <col width="135" />
              <col width="63" />
              <col />
            </colgroup>
            <thead>
              <tr>
                <th>图层构件</th>
                <th>显示图元</th>
                <th />
              </tr>
            </thead>
            <tbody>
              {layers.map((l, i) => (
                <tr key={i}>
                  <td>
                    <TreeCell $root={l.level === 0}>
                      {l.level === 1 && <Rail $w={4} $arm />}
                      {l.level === 2 && (
                        <>
                          <Rail $w={10} />
                          <Rail $w={17} $arm $end={l.end} />
                        </>
                      )}
                      {l.level < 2 && <Expander type="button" aria-label={`折叠 ${l.text}`} />}
                      <LayerName>{l.text}</LayerName>
                    </TreeCell>
                  </td>
                  <td>
                    <CheckBox aria-label={l.text} defaultChecked={l.state === 1} $mixed={l.state === 2} />
                  </td>
                  <td />
                </tr>
              ))}
            </tbody>
          </LayerTable>
        </SidePanel>
      </Work>
    </Shell>
  );
}
